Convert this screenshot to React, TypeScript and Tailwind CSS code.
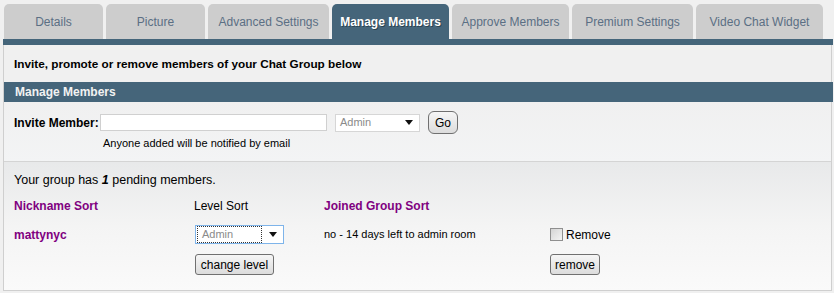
import React from "react"

const tabs = [
  { label: "Details", w: "w-[99px]" },
  { label: "Picture", w: "w-[99px]" },
  { label: "Advanced Settings", w: "w-[121px]" },
  { label: "Manage Members", w: "w-[117px]", active: true },
  { label: "Approve Members", w: "w-[117px]" },
  { label: "Premium Settings", w: "w-[121px]" },
  { label: "Video Chat Widget", w: "w-[127px]" },
]

function FakeSelect({ className, focused }: { className: string; focused?: boolean }) {
  return (
    <div className={`flex items-center bg-white border ${focused ? "border-[#7eb4ea]" : "border-[#d6d6d6]"} ${className}`}>
      <div
        className={`flex-1 h-full flex items-center pl-[4px] text-[11px] text-[#8a8a8a] ${
          focused ? "border border-dotted border-[#333] m-[1px]" : ""
        }`}
      >
        Admin
      </div>
      <svg width="8" height="5" viewBox="0 0 8 5" className="mx-[6px]">
        <path d="M0 0h8L4 5z" fill="#111" />
      </svg>
    </div>
  )
}

function Btn({ children, className }: { children: React.ReactNode; className: string }) {
  return (
    <button className={`flex items-center justify-center border border-[#707070] bg-gradient-to-b from-[#f6f6f6] to-[#dcdcdc] text-[12px] text-black ${className}`}>
      {children}
    </button>
  )
}

export default function App() {
  return (
    <div className="w-[834px] h-[293px] bg-[#f0f0f0] pt-[4px] pl-[3px] font-['Liberation_Sans',Arial,sans-serif]">
      {/* Tabs */}
      <div className="flex gap-[3px] pl-[1px] h-[35px]">
        {tabs.map((t) => (
          <div
            key={t.label}
            className={`${t.w} h-full rounded-t-[5px] flex items-center justify-center text-[12px] ${
              t.active
                ? "bg-[#45657a] text-white font-bold [text-shadow:1px_1px_0_#2c4352]"
                : "bg-[#cdcdcd] text-[#5b6f84]"
            }`}
          >
            {t.label}
          </div>
        ))}
      </div>
      <div className="w-[830px] h-[6px] bg-[#45657a]" />

      {/* Content box */}
      <div className="w-[829px] border-x border-b border-[#cfcfcf]">
        <div className="h-[37px] flex items-center pl-[10px] text-[11.75px] font-bold text-black">
          Invite, promote or remove members of your Chat Group below
        </div>

        <div className="h-[20px] bg-[#45657a] flex items-center pl-[11px] text-[12px] font-bold text-[#f2f2f2] mr-[-2px]">
          Manage Members
        </div>

        {/* Invite */}
        <div className="h-[60px] border-b border-[#d4d4d4] bg-gradient-to-b from-[#f0f0f0] to-[#f3f4f5]">
          <div className="flex items-center h-[33px] pt-[8px] pl-[10px]">
            <span className="text-[12px] font-bold text-black w-[86px]">Invite Member:</span>
            <div className="w-[227px] h-[17px] bg-white border border-[#d0d0d0]" />
            <FakeSelect className="ml-[8px] w-[85px] h-[18px]" />
            <Btn className="ml-[8px] w-[30px] h-[23px] rounded-[6px] text-[12px] border-[#8a8a8a]">Go</Btn>
          </div>
          <div className="pl-[99px] text-[11px] text-black leading-[14px] mt-[1px]">
            Anyone added will be notified by email
          </div>
        </div>

        {/* Members */}
        <div className="h-[128px] bg-gradient-to-b from-[#e8e9ea] via-[#f4f4f4] to-[#fafafa] pl-[10px]">
          <div className="pt-[11px] h-[25px] text-[12.5px] text-black leading-[14px]">
            Your group has <b className="italic">1</b> pending members.
          </div>
          <div className="flex items-center h-[25px] text-[12px] mt-[6px]">
            <span className="w-[180px] font-bold text-[#800080]">Nickname Sort</span>
            <span className="w-[130px] text-black">Level Sort</span>
            <span className="font-bold text-[#800080]">Joined Group Sort</span>
          </div>
          <div className="flex items-center h-[23px] mt-[5px]">
            <span className="w-[181px] text-[12px] font-bold text-[#800080]">mattynyc</span>
            <FakeSelect focused className="w-[89px] h-[19px]" />
            <span className="ml-[40px] w-[226px] text-[11px] text-black">no - 14 days left to admin room</span>
            <span className="w-[13px] h-[13px] border border-[#8f8f8f] bg-gradient-to-br from-[#d4d4d4] to-[#f4f4f4]" />
            <span className="ml-[3px] text-[12px] text-black">Remove</span>
          </div>
          <div className="flex items-center h-[21px] mt-[8px]">
            <Btn className="ml-[181px] w-[79px] h-[21px] rounded-[3px]">change level</Btn>
            <Btn className="ml-[276px] w-[50px] h-[21px] rounded-[3px]">remove</Btn>
          </div>
        </div>
      </div>
    </div>
  )
}
